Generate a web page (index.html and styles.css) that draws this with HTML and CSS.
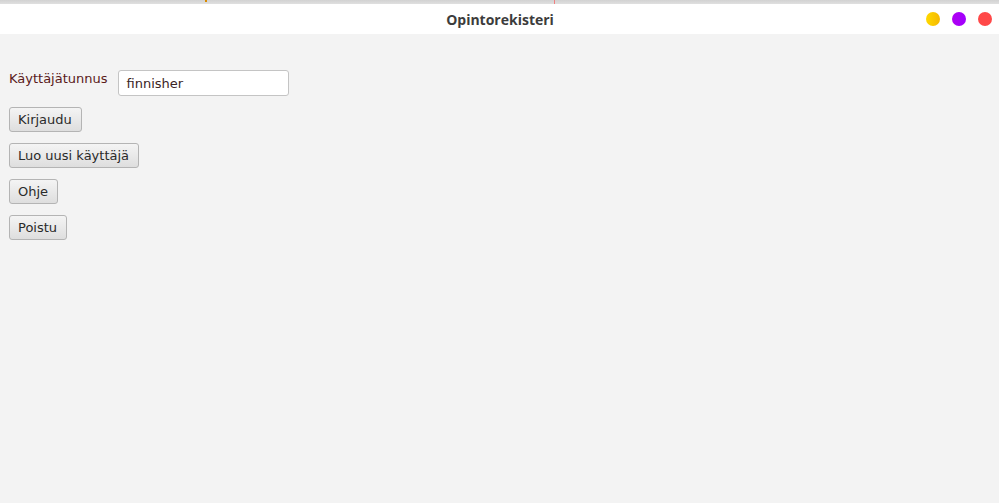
FILE: index.html
```html
<!DOCTYPE html>
<html>
<head>
<meta charset="utf-8">
<link rel="stylesheet" href="styles.css">
<title>Opintorekisteri</title>
</head>
<body>
<div class="window">
  <div class="topstrip">
    <span class="mark mark-orange"></span>
    <span class="mark mark-red"></span>
  </div>
  <div class="titlebar">
    <div class="title">Opintorekisteri</div>
    <div class="controls">
      <span class="dot dot-yellow"></span>
      <span class="dot dot-purple"></span>
      <span class="dot dot-red"></span>
    </div>
  </div>
  <div class="content">
    <div class="row">
      <label class="label">Käyttäjätunnus</label>
      <div class="field">finnisher</div>
    </div>
    <button class="btn">Kirjaudu</button>
    <button class="btn">Luo uusi käyttäjä</button>
    <button class="btn">Ohje</button>
    <button class="btn">Poistu</button>
  </div>
</div>
</body>
</html>
```

FILE: styles.css
```css
html, body {
  margin: 0;
  padding: 0;
  width: 999px;
  height: 503px;
  overflow: hidden;
  background: #f2f2f2;
}
.window {
  display: flex;
  flex-direction: column;
  height: 503px;
}
.topstrip {
  height: 4px;
  background: linear-gradient(#d2d2d2, #e0e0e0);
  position: relative;
}
.mark {
  position: absolute;
  top: 0;
}
.mark-orange { left: 205px; background: #d98a00; width: 2px; height: 2px; }
.mark-red { left: 554px; background: #f08080; width: 1px; height: 4px; }
.titlebar {
  height: 30px;
  background: #ffffff;
  position: relative;
  display: flex;
  align-items: center;
  justify-content: center;
}
.title {
  font-family: "Open Sans", "DejaVu Sans", sans-serif;
  font-weight: 700;
  font-size: 14px;
  color: #3c3c3c;
  padding-left: 1px;
}
.controls {
  position: absolute;
  right: 7px;
  top: 8px;
  display: flex;
  gap: 12px;
}
.dot {
  width: 14px;
  height: 14px;
  border-radius: 50%;
  display: block;
}
.dot-yellow { background: linear-gradient(90deg, #ffd900, #f5b800); }
.dot-purple { background: linear-gradient(90deg, #b000f0, #a000ff); }
.dot-red { background: #ff4848; }
.content {
  flex: 1;
  background: #f3f3f3;
  padding: 36px 9px 0;
  display: flex;
  flex-direction: column;
  align-items: flex-start;
  font-family: "DejaVu Sans", sans-serif;
  font-size: 13px;
}
.row {
  display: flex;
  align-items: flex-start;
  gap: 10px;
  margin-bottom: 11px;
}
.label {
  color: #5a1a1a;
  padding-top: 1px;
  line-height: 15px;
}
.field {
  width: 161px;
  height: 24px;
  box-sizing: content-box;
  padding: 0 0 0 8px;
  background: #ffffff;
  border: 1px solid #c4c4c4;
  border-radius: 3px;
  color: #3a2424;
  line-height: 25px;
}
.btn {
  font-family: "DejaVu Sans", sans-serif;
  font-size: 13px;
  color: #2a2a2a;
  height: 25px;
  padding: 0 9px 0 8px;
  margin: 0 0 11px;
  border: 1px solid #b4b4b4;
  border-radius: 3px;
  background: linear-gradient(#f4f4f4, #dedede);
  line-height: 23px;
}
```
